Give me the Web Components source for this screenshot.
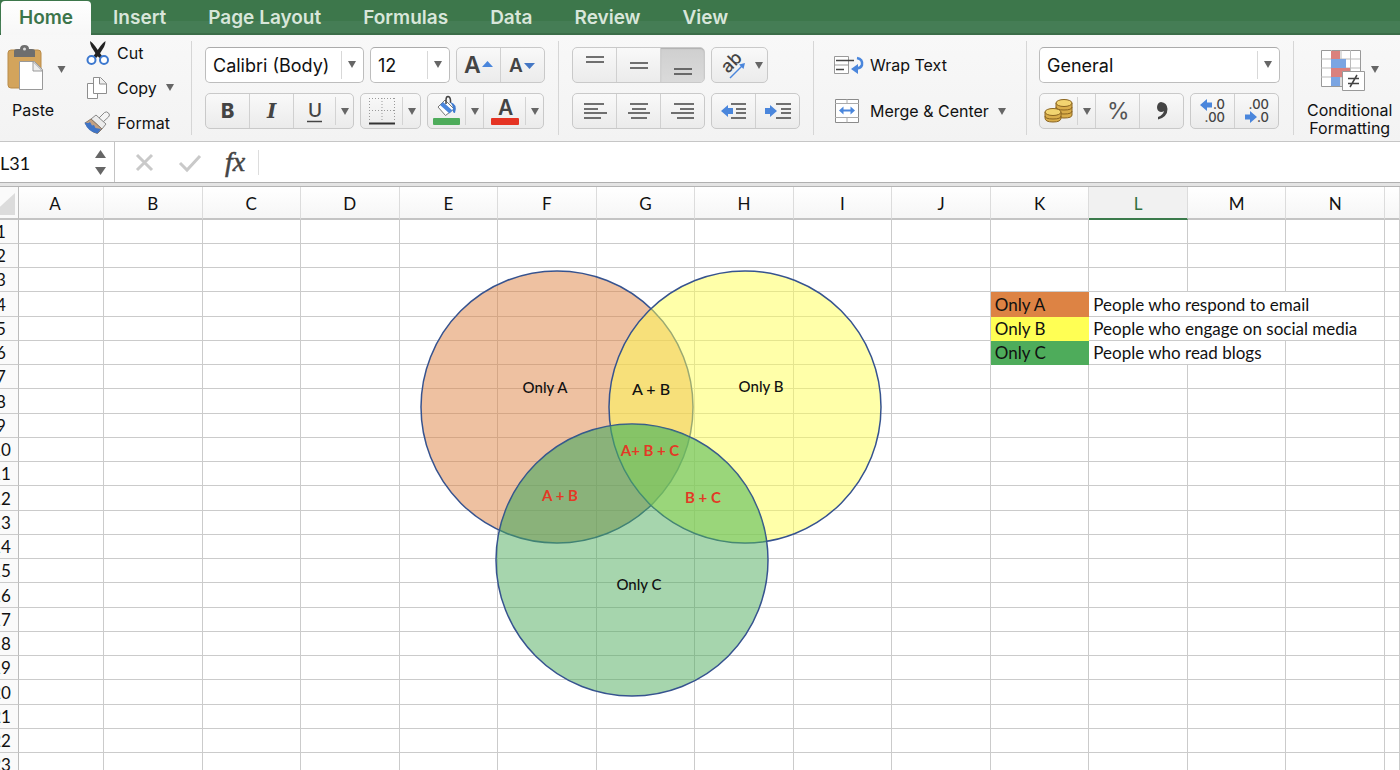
<!DOCTYPE html>
<html lang="en">
<head>
<meta charset="utf-8">
<meta name="viewport" content="width=device-width, initial-scale=1">
<title>Workbook</title>
<style>
    html, body {
        margin: 0;
        height: 100%;
    }

    body {
        display: flex;
        flex-direction: column;
        overflow: hidden;
        background: #fff;
        color: #111;
        font-family: Inter, "Liberation Sans", sans-serif;
        --cell-font: Lato, "Open Sans", sans-serif;
    }
</style>
</head>
<body>
<ribbon-tabs>
    <a href="#home" aria-current="page">Home</a>
    <a href="#insert">Insert</a>
    <a href="#layout">Page Layout</a>
    <a href="#formulas">Formulas</a>
    <a href="#data">Data</a>
    <a href="#review">Review</a>
    <a href="#view">View</a>
</ribbon-tabs>
<home-ribbon></home-ribbon>
<formula-bar cell="L31"></formula-bar>
<sheet-grid active="L"><venn-diagram></venn-diagram></sheet-grid>

<script>
class RibbonTabs extends HTMLElement {
    connectedCallback() {
        this.attachShadow({ mode: 'open' });
        this.shadowRoot.innerHTML = `
            <style>
                :host {
                    display: block;
                    flex: none;
                    background: linear-gradient(#3d774b 0 21px, #457d55 21px 33px, #3b6d49 33px);
                }

                nav {
                    display: flex;
                    gap: 2px;
                    height: 35px;
                    padding-left: 1px;
                    box-sizing: border-box;
                }

                ::slotted(a) {
                    margin-top: 1px;
                    padding: 0 20px;
                    border-radius: 4px 4px 0 0;
                    color: #d8e6da;
                    font-size: 19px;
                    font-weight: 600;
                    line-height: 33px;
                    text-decoration: none;
                    white-space: nowrap;
                }

                ::slotted(a[aria-current]) {
                    padding: 0 18px;
                    background: linear-gradient(#fff, #f7f7f7);
                    color: #3c754b;
                }
            </style>
            <nav><slot></slot></nav>
        `;
    }
}

// one push button, with an optional split arrow
class ToolButton extends HTMLElement {
    connectedCallback() {
        this.attachShadow({ mode: 'open' });
        const label = this.getAttribute('label');
        const arrow = this.hasAttribute('split')
            ? `<button class="arrow" aria-label="${label} options"><svg width="8" height="7"><path d="M0 0h8L4 7z"/></svg></button>`
            : '';
        this.shadowRoot.innerHTML = `
            <style>
                :host {
                    display: flex;
                    --main: 43px;
                }

                :host(:not(:first-child)) {
                    border-left: 1px solid #d0d0d0;
                }

                :host([size="mid"]) { --main: 41px; }
                :host([size="small"]) { --main: 37px; }

                button {
                    display: flex;
                    align-items: center;
                    justify-content: center;
                    padding: 0;
                    border: 0;
                    background: none;
                    font: inherit;
                    color: #444;
                }

                .main {
                    width: var(--main);
                }

                :host([pressed]) .main {
                    border-radius: 0 4px 4px 0;
                    background: linear-gradient(#cfcfcf, #dadada);
                    box-shadow: inset 0 1px 1px #b0b0b0;
                }

                .arrow {
                    width: 18px;
                    margin: 3px 0;
                    border-left: 1px solid #d3d3d3;
                    fill: #666;
                }

                :host([plain]) .arrow {
                    border-color: transparent;
                }
            </style>
            <button class="main" aria-label="${label}"><slot></slot></button>${arrow}
        `;
    }
}

class ButtonStrip extends HTMLElement {
    connectedCallback() {
        this.attachShadow({ mode: 'open' });
        this.shadowRoot.innerHTML = `
            <style>
                :host {
                    display: flex;
                    height: 36px;
                    box-sizing: border-box;
                    border: 1px solid #c9c9c9;
                    border-radius: 5px;
                    background: linear-gradient(#f9f9f9, #ebebeb);
                }
            </style>
            <slot></slot>
        `;
    }
}

class ComboBox extends HTMLElement {
    connectedCallback() {
        this.attachShadow({ mode: 'open' });
        this.shadowRoot.innerHTML = `
            <style>
                :host {
                    display: grid;
                    height: 36px;
                    box-sizing: border-box;
                    border: 1px solid #bdbdbd;
                    border-top-color: #ababab;
                    border-radius: 5px;
                    background: #fff;
                }

                select, svg {
                    grid-area: 1 / 1;
                }

                select {
                    appearance: none;
                    width: 100%;
                    padding: 0 0 0 7px;
                    border: 0;
                    background: none;
                    color: #111;
                    font: 18px Inter, sans-serif;
                }

                svg {
                    justify-self: end;
                    align-self: center;
                    pointer-events: none;
                }
            </style>
            <select aria-label="${this.getAttribute('label')}"><option>${this.getAttribute('value')}</option></select>
            <svg width="22" height="28"><path d="M.5 0v28" stroke="#d8d8d8"/><path d="M7 10h8l-4 7z" fill="#666"/></svg>
        `;
    }
}

class RibbonGroup extends HTMLElement {
    connectedCallback() {
        this.attachShadow({ mode: 'open' });
        this.shadowRoot.innerHTML = `
            <style>
                :host {
                    display: flex;
                    flex: none;
                    position: relative;
                    box-sizing: border-box;
                }

                :host(:not([last]))::after {
                    content: '';
                    position: absolute;
                    right: 0;
                    top: 6px;
                    bottom: 6px;
                    width: 1px;
                    background: #d6d6d6;
                }
            </style>
            <slot></slot>
        `;
    }
}

class HomeRibbon extends HTMLElement {
    connectedCallback() {
        this.attachShadow({ mode: 'open' });
        this.shadowRoot.innerHTML = `
            <style>
                :host {
                    display: flex;
                    flex: none;
                    height: 106px;
                    border-bottom: 1px solid #c6c6c6;
                    background: linear-gradient(#f8f8f8, #f3f3f3);
                }

                svg {
                    overflow: visible;
                }

                .clipboard { width: 192px; }
                .font { width: 367px; padding-left: 13px; }
                .align { width: 255px; padding-left: 13px; }
                .wrap { width: 213px; padding-left: 20px; }
                .number { width: 267px; padding-left: 12px; }
                .styles { flex: 1 0 106px; padding-left: 13px; }

                .rows {
                    display: grid;
                    grid-template-rows: 36px 36px;
                    align-content: start;
                    gap: 10px;
                    padding-top: 12px;
                }

                .row {
                    display: flex;
                    gap: 6px;
                }

                .face { width: 159px; }
                .size { width: 80px; }
                .format { width: 241px; }

                .flat {
                    display: flex;
                    align-items: center;
                    gap: 6px;
                    padding: 0;
                    border: 0;
                    background: none;
                    color: #111;
                    font: 16px/18px Inter, sans-serif;
                    white-space: nowrap;
                }

                .flat svg:first-child {
                    flex: none;
                }

                .tall {
                    flex-direction: column;
                    align-items: flex-start;
                    justify-content: flex-start;
                    gap: 8px;
                    padding: 10px 0 0 7px;
                }

                .tall span {
                    padding-left: 5px;
                }

                .styles .tall {
                    padding: 14px 0 0 0;
                }

                .styles .tall svg {
                    margin-left: 13px;
                }

                .styles .tall span {
                    padding: 0;
                    text-align: center;
                }

                .list {
                    display: grid;
                    grid-template-rows: repeat(3, 35px);
                    padding-left: 18px;
                }

                .drop {
                    fill: #666;
                    padding-left: 3px;
                }
            </style>

            <ribbon-group class="clipboard">
                <button class="flat tall">
                    <svg width="60" height="48" viewBox="0 0 60 48">
                        <rect x="1" y="5" width="33" height="38" rx="3" fill="#d3a45c" stroke="#b98b48"/>
                        <path d="M7 6q0-2 3-2h3q0-4 4.500-4t4.500 4h3q3 0 3 2v6H7z" fill="#6e6e6e"/>
                        <circle cx="17.500" cy="4" r="1.500" fill="#ddd"/>
                        <path d="M12.500 16.500h15l8 8v20h-23z" fill="#fff" stroke="#999"/>
                        <path d="M26 16.500v9.500h9.500z" fill="#eee" stroke="#999"/>
                        <path d="M50.500 21h8l-4 7z" fill="#666"/>
                    </svg>
                    <span>Paste</span>
                </button>
                <div class="list">
                    <button class="flat">
                        <svg width="26" height="26" viewBox="0 0 26 26">
                            <path d="M5 1q3 2 5 5l7 10-2.500 2-3-3-5-8Q5 4 5 1z" fill="#222"/>
                            <path d="M20.500 1q-3 2-5 5l-7 10 2.500 2 3-3 5-8q1.500-3 1.500-6z" fill="#222"/>
                            <circle cx="6.500" cy="20" r="4" fill="#fff" stroke="#3c78cf" stroke-width="2"/>
                            <circle cx="19" cy="20" r="4" fill="#fff" stroke="#3c78cf" stroke-width="2"/>
                        </svg>
                        <span>Cut</span>
                    </button>
                    <button class="flat">
                        <svg width="26" height="26" viewBox="0 0 26 26" fill="#fff" stroke="#8e8e8e">
                            <path d="M2.500 8.500h10v15h-10z"/>
                            <path d="M8.500 2.500h7l6 6v10h-13z"/>
                            <path d="M14.500 2.500v6.500h7" fill="#eee"/>
                        </svg>
                        <span>Copy</span>
                        <svg class="drop" width="8" height="7"><path d="M0 0h8L4 7z"/></svg>
                    </button>
                    <button class="flat">
                        <svg width="26" height="26" viewBox="0 0 26 26">
                            <path d="M14 8l5.500-5.500q2-1.500 4 .5t0 4L18 12z" fill="#f4f4f4" stroke="#888"/>
                            <path d="M11 5l10 9-4 5L6 9z" fill="#ececec" stroke="#888"/>
                            <path d="M6 9l11 10-4.500 4.500Q5 22 0 13z" fill="#c3a183" stroke="#8a7866"/>
                            <path d="M-.5 12.500l4 .5 1.500-1 2 3.500 2-.5 1.500 3 5.500 1-3.500 4.500Q3 22-.5 12.500z" fill="#3f74c6"/>
                        </svg>
                        <span>Format</span>
                    </button>
                </div>
            </ribbon-group>

            <ribbon-group class="font">
                <div class="rows">
                    <div class="row">
                        <combo-box class="face" label="Font" value="Calibri (Body)"></combo-box>
                        <combo-box class="size" label="Font size" value="12"></combo-box>
                        <button-strip>
                            <tool-button label="Increase font size">
                                <svg width="32" height="26"><text x="1" y="21" font-size="23" font-weight="600" fill="#444">A</text><path d="M19 15l5.500-6 5.500 6z" fill="#4a86dc"/></svg>
                            </tool-button>
                            <tool-button label="Decrease font size">
                                <svg width="30" height="26"><text x="1" y="20" font-size="19" font-weight="600" fill="#444">A</text><path d="M16 11h11l-5.500 6z" fill="#4477c4"/></svg>
                            </tool-button>
                        </button-strip>
                    </div>
                    <div class="row">
                        <button-strip>
                            <tool-button label="Bold"><svg width="18" height="26"><text x="2" y="20" font-size="20" font-weight="800" fill="#444">B</text></svg></tool-button>
                            <tool-button label="Italic"><svg width="18" height="26"><text x="4" y="20" font-family="DejaVu Serif" font-size="20" font-style="italic" font-weight="700" fill="#444">I</text></svg></tool-button>
                            <tool-button label="Underline" size="mid" split><svg width="18" height="26"><text x="2" y="19" font-size="19" font-weight="500" fill="#444">U</text><path d="M1 23.500h15" stroke="#444" stroke-width="1.500"/></svg></tool-button>
                        </button-strip>
                        <button-strip>
                            <tool-button label="Borders" size="mid" split>
                                <svg width="28" height="28" viewBox="0 0 28 28" fill="none" stroke="#999" stroke-dasharray="1 2">
                                    <path d="M1 1.500h26M1 13.500h26M1.500 1v24M14 1v24M26.500 1v24"/>
                                    <path d="M1 26.500h26" stroke="#333" stroke-width="2" stroke-dasharray="none"/>
                                </svg>
                            </tool-button>
                        </button-strip>
                        <button-strip>
                            <tool-button label="Fill color" size="small" split>
                                <svg width="28" height="30" viewBox="0 0 28 30">
                                    <path d="M5 11L12 4l9 9-8.500 6.500z" fill="#fff" stroke="#777"/>
                                    <path d="M10 6l9.500 8.500-3 3L7 9z" fill="#4a86dc"/>
                                    <path d="M13 8V4q0-3.500 2-3.500T17.500 4v3" fill="none" stroke="#444" stroke-width="1.500"/>
                                    <path d="M17 6q8 2 5 11-3 0-2-5-1-4-3-6z" fill="#3f7bd0"/>
                                    <rect x="0" y="22" width="27" height="7" rx="1" fill="#4eac5b"/>
                                </svg>
                            </tool-button>
                            <tool-button label="Font color" size="mid" split>
                                <svg width="28" height="30"><text x="7" y="19" font-size="21" font-weight="600" fill="#444">A</text><rect y="22" width="28" height="7" rx="1" fill="#e53323"/></svg>
                            </tool-button>
                        </button-strip>
                    </div>
                </div>
            </ribbon-group>

            <ribbon-group class="align">
                <div class="rows">
                    <div class="row">
                        <button-strip>
                            <tool-button label="Align top"><svg width="18" height="28" stroke="#444" stroke-width="1.500"><path d="M0 6h18M0 11h18"/></svg></tool-button>
                            <tool-button label="Align middle"><svg width="18" height="28" stroke="#444" stroke-width="1.500"><path d="M0 12h18M0 17h18"/></svg></tool-button>
                            <tool-button label="Align bottom" pressed><svg width="18" height="28" stroke="#444" stroke-width="1.500"><path d="M0 18h18M0 23h18"/></svg></tool-button>
                        </button-strip>
                        <button-strip>
                            <tool-button label="Orientation" size="small" split plain>
                                <svg width="28" height="28" viewBox="0 0 28 28">
                                    <text transform="translate(11 23) rotate(-45)" font-size="18" font-weight="500" fill="#444">ab</text>
                                    <path d="M13 27L25 15" stroke="#4a86dc" stroke-width="1.500"/>
                                    <path d="M28 12l-1.500 6-4.500-4.500z" fill="#4a86dc"/>
                                </svg>
                            </tool-button>
                        </button-strip>
                    </div>
                    <div class="row">
                        <button-strip>
                            <tool-button label="Align left"><svg width="24" height="18" stroke="#444" stroke-width="1.500"><path d="M1 2h20M1 7h14M1 11h23M1 16h17"/></svg></tool-button>
                            <tool-button label="Center"><svg width="22" height="18" stroke="#444" stroke-width="1.500"><path d="M2 2h18M4 7h14M0 11h22M3 16h16"/></svg></tool-button>
                            <tool-button label="Align right"><svg width="24" height="18" stroke="#444" stroke-width="1.500"><path d="M3 2h20M9 7h14M0 11h23M6 16h17"/></svg></tool-button>
                        </button-strip>
                        <button-strip>
                            <tool-button label="Decrease indent"><svg width="28" height="18"><path d="M1 9l7-6v3h5v6H8v3z" fill="#4a86dc"/><path d="M11 2h15M16 7h10M16 11h10M11 16h15" stroke="#444" stroke-width="1.500"/></svg></tool-button>
                            <tool-button label="Increase indent"><svg width="28" height="18"><path d="M13 9L6 3v3H1v6h5v3z" fill="#4a86dc"/><path d="M12 2h15M17 7h10M17 11h10M12 16h15" stroke="#444" stroke-width="1.500"/></svg></tool-button>
                        </button-strip>
                    </div>
                </div>
            </ribbon-group>

            <ribbon-group class="wrap">
                <div class="rows">
                    <button class="flat">
                        <svg width="30" height="22" viewBox="0 0 30 22">
                            <path d="M.5 2.500h14v17H.5zM.5 11h14" fill="#fff" stroke="#999"/>
                            <path d="M2 6.500h18M2 15.500h8" stroke="#444" stroke-width="1.500"/>
                            <path d="M23 4q6 1 5 7-1 3-5 3.500" fill="none" stroke="#4a86dc" stroke-width="2.500"/>
                            <path d="M17 15l7-5v10z" fill="#4a86dc"/>
                        </svg>
                        <span>Wrap Text</span>
                    </button>
                    <button class="flat">
                        <svg width="30" height="26" viewBox="0 0 30 26">
                            <path d="M1.500 1.500h23v23h-23z" fill="#fff" stroke="#8b8b8b"/>
                            <path d="M1 5.500h24M1 19.500h24M13 1v4.500M13 19.500v5" stroke="#aaa"/>
                            <path d="M5 12.500l4.500-4v3h7v-3l4.500 4-4.500 4v-3h-7v3z" fill="#4a86dc"/>
                        </svg>
                        <span>Merge &amp; Center</span>
                        <svg class="drop" width="8" height="7"><path d="M0 0h8L4 7z"/></svg>
                    </button>
                </div>
            </ribbon-group>

            <ribbon-group class="number">
                <div class="rows">
                    <div class="row">
                        <combo-box class="format" label="Number format" value="General"></combo-box>
                    </div>
                    <div class="row">
                        <button-strip>
                            <tool-button label="Currency" size="small" split>
                                <svg width="30" height="26" viewBox="0 0 30 26" stroke="#8a6420">
                                    <g fill="#d9ad4a">
                                        <path d="M12 5v12q0 3 8 3t8-3V5z"/>
                                        <path d="M12 9q0 3 8 3t8-3M12 13q0 3 8 3t8-3" fill="none"/>
                                        <ellipse cx="20" cy="5" rx="8" ry="3.500" fill="#f2d470"/>
                                        <path d="M1 14v6q0 4 8 4t8-4v-6z"/>
                                        <path d="M1 18q0 3 8 3t8-3" fill="none"/>
                                        <ellipse cx="9" cy="14" rx="8" ry="3.500" fill="#f2d470"/>
                                    </g>
                                </svg>
                            </tool-button>
                            <tool-button label="Percent"><svg width="22" height="26"><text x="0" y="21" font-size="23" fill="#555">%</text></svg></tool-button>
                            <tool-button label="Comma"><svg width="14" height="20" viewBox="0 0 14 20"><path d="M6 1q6 .5 6.500 7 0 8-9.500 10.500V16q5-2 6-6-1 1-3 1Q2 10.500 2 6 2.500 1.500 6 1z" fill="#444"/></svg></tool-button>
                        </button-strip>
                        <button-strip>
                            <tool-button label="Increase decimal">
                                <svg width="28" height="28"><path d="M1 8l7-6v3.500h5v5H8V14z" fill="#4a86dc"/><text x="26" y="12" text-anchor="end" font-size="13" font-weight="500" fill="#444">.0</text><text x="26" y="25" text-anchor="end" font-size="13" font-weight="500" fill="#444">.00</text></svg>
                            </tool-button>
                            <tool-button label="Decrease decimal">
                                <svg width="28" height="28"><path d="M14 20l-7-6v3.500H2v5h5V26z" fill="#4a86dc"/><text x="26" y="12" text-anchor="end" font-size="13" font-weight="500" fill="#444">.00</text><text x="26" y="25" text-anchor="end" font-size="13" font-weight="500" fill="#444">.0</text></svg>
                            </tool-button>
                        </button-strip>
                    </div>
                </div>
            </ribbon-group>

            <ribbon-group class="styles" last>
                <button class="flat tall">
                    <svg width="60" height="44" viewBox="0 0 60 44">
                        <path d="M1.500 1.500h39v36h-39z" fill="#fff" stroke="#999"/>
                        <path d="M1 10h39M1 19h39M1 28h39M11.500 1v36M21 1v36M30.500 1v36" stroke="#bbb"/>
                        <path d="M11 2h9v8h-9zM11 19h19v9H11z" fill="#da817d"/>
                        <path d="M11 10h15v9H11zM11 28h9v9h-9z" fill="#7ba5e2"/>
                        <path d="M22.500 22.500h22v19h-22z" fill="#fff" stroke="#999"/>
                        <path d="M28 29.500h11M28 34.500h11M37 26l-7 12" stroke="#444" stroke-width="1.500"/>
                        <path d="M51 17h8l-4 7z" fill="#666"/>
                    </svg>
                    <span>Conditional<br>Formatting</span>
                </button>
            </ribbon-group>
        `;
    }
}

class FormulaBar extends HTMLElement {
    connectedCallback() {
        this.attachShadow({ mode: 'open' });
        this.shadowRoot.innerHTML = `
            <style>
                :host {
                    display: flex;
                    flex: none;
                    align-items: stretch;
                    height: 40px;
                    border-bottom: 1px solid #b0b0b0;
                    background: #fff;
                }

                .name {
                    display: flex;
                    align-items: center;
                    width: 114px;
                    border-right: 1px solid #c4c4c4;
                }

                input {
                    min-width: 0;
                    padding: 0;
                    border: 0;
                    outline: 0;
                    background: none;
                    color: #111;
                    font: 18px var(--cell-font);
                }

                .name input {
                    width: 94px;
                    padding-top: 2px;
                }

                .content {
                    flex: 1;
                    margin: 8px 0 7px;
                    padding-left: 10px;
                    border-left: 1px solid #ddd;
                }

                .tools {
                    display: flex;
                    align-items: center;
                    gap: 23px;
                    padding: 0 13px 0 19px;
                }

                button {
                    display: flex;
                    padding: 0;
                    border: 0;
                    background: none;
                    color: #444;
                    font: italic 28px/30px "Liberation Serif", serif;
                    -webkit-text-stroke: 0.5px #444;
                }

                svg {
                    overflow: visible;
                }
            </style>
            <div class="name">
                <input aria-label="Name box" value="${this.getAttribute('cell')}">
                <svg width="12" height="26" fill="#666"><path d="M1 9h11L6.500 1zM1 18h11l-5.500 8z"/></svg>
            </div>
            <div class="tools">
                <button aria-label="Cancel"><svg width="21" height="22" fill="none" stroke="#c9c9c9" stroke-width="3"><path d="M3 4l15 15M18 4L3 19"/></svg></button>
                <button aria-label="Enter"><svg width="24" height="22" fill="none" stroke="#c9c9c9" stroke-width="3"><path d="M2 12l7 7L22 5"/></svg></button>
                <button aria-label="Insert function">fx</button>
            </div>
            <input class="content" aria-label="Formula">
        `;
    }
}

const COLUMNS = 'ABCDEFGHIJKLMN'.split('');
const ROWS = 23;

// key and description by row; span is how far the description runs over empty cells
const LEGEND = {
    4: { key: 'Only A', color: '#dd8344', text: 'People who respond to email', span: 3 },
    5: { key: 'Only B', color: '#ffff54', text: 'People who engage on social media', span: 3 },
    6: { key: 'Only C', color: '#4eac5b', text: 'People who read blogs', span: 2 }
};

class SheetGrid extends HTMLElement {
    connectedCallback() {
        this.attachShadow({ mode: 'open' });
        const active = this.getAttribute('active');
        const heads = COLUMNS.map(c => `<th scope="col"${c === active ? ' class="active"' : ''}>${c}</th>`).join('');
        let body = '';
        for (let r = 1; r <= ROWS; r++) {
            body += `<tr><th scope="row">${r}</th>${this.cells(LEGEND[r])}</tr>`;
        }
        this.shadowRoot.innerHTML = `
            <style>
                :host {
                    display: block;
                    position: relative;
                    flex: 1;
                    min-height: 0;
                    border-top: 3px solid #e4e4e4;
                    box-shadow: inset 0 1px #b4b4b4;
                    padding-top: 1px;
                    overflow: hidden;
                    font-family: var(--cell-font);
                }

                /* the view is scrolled a little past the row header */
                table {
                    width: calc(100% + 14px);
                    margin-left: -14px;
                    table-layout: fixed;
                    border-collapse: separate;
                    border-spacing: 0;
                    font-size: 17px;
                    line-height: 20px;
                }

                .rowhead { width: 33px; }
                .first { width: 85px; }
                .rest { width: 15px; }

                th, td {
                    box-sizing: border-box;
                    height: 24px;
                    padding: 1px 0 0;
                    border-right: 1px solid #cbcbcb;
                    border-bottom: 1px solid #cbcbcb;
                    font-weight: 400;
                    white-space: nowrap;
                }

                tbody tr:nth-child(4n) > * {
                    height: 25px;
                }

                thead th {
                    height: 33px;
                    padding-top: 2px;
                    border-bottom: 2px solid #c4c4c4;
                    border-right-color: #dcdcdc;
                    background: linear-gradient(#fff, #f6f6f6);
                }

                thead th:nth-child(2) {
                    padding-right: 12px;
                }

                thead th.active {
                    border-bottom-color: #3b7a4b;
                    background: #f1f1f1;
                    color: #2f7040;
                }

                .corner svg {
                    display: block;
                    margin-left: 14px;
                }

                tbody th, th.corner {
                    border-right-color: #bcbcbc;
                    background: #fafafa;
                }

                tbody th {
                    padding-right: 2px;
                }

                td {
                    text-align: left;
                }

                .key {
                    padding-left: 4px;
                    border-color: transparent;
                }

                .text {
                    padding-left: 4px;
                }
            </style>
            <table>
                <colgroup><col class="rowhead"><col class="first"><col span="13"><col class="rest"></colgroup>
                <thead><tr><th class="corner" aria-label="Select all"><svg width="16" height="26"><path d="M15 2v22H-9z" fill="#dcdcdc"/></svg></th>${heads}<th></th></tr></thead>
                <tbody>${body}</tbody>
            </table>
            <slot></slot>
        `;
    }

    cells(legend) {
        if (!legend) {
            return '<td></td>'.repeat(15);
        }
        return '<td></td>'.repeat(10) +
            `<td class="key" style="background:${legend.color}">${legend.key}</td>` +
            `<td class="text" colspan="${legend.span}">${legend.text}</td>` +
            '<td></td>'.repeat(4 - legend.span);
    }
}

class VennDiagram extends HTMLElement {
    connectedCallback() {
        this.attachShadow({ mode: 'open' });
        this.shadowRoot.innerHTML = `
            <style>
                :host {
                    position: absolute;
                    left: 419px;
                    top: 83px;
                }

                svg {
                    display: block;
                }

                circle {
                    fill-opacity: 0.5;
                    stroke: #36538f;
                    stroke-width: 1.500;
                }

                .tint {
                    fill-opacity: 0.2;
                    stroke: none;
                }

                text {
                    font-size: 15px;
                    font-weight: 500;
                    text-anchor: middle;
                    fill: #111;
                }

                .shared {
                    font-weight: 700;
                    fill: #e23a26;
                }

                .large {
                    font-size: 16px;
                }
            </style>
            <svg width="464" height="430" role="img" aria-label="Venn diagram of A, B and C">
                <clipPath id="in-c"><circle cx="213" cy="291" r="136"/></clipPath>
                <circle cx="138" cy="138" r="136" fill="#dd8344"/>
                <circle cx="326" cy="138" r="136" fill="#ffff54"/>
                <circle cx="213" cy="291" r="136" fill="#4eac5b"/>
                <g clip-path="url(#in-c)">
                    <circle class="tint" cx="138" cy="138" r="136" fill="#3aa770"/>
                    <circle class="tint" cx="326" cy="138" r="136" fill="#70da5a"/>
                </g>
                <text x="126" y="124">Only A</text>
                <text x="232" y="126" class="large">A + B</text>
                <text x="342" y="123">Only B</text>
                <text x="231" y="187" class="shared">A+ B + C</text>
                <text x="141" y="232" class="shared">A + B</text>
                <text x="284" y="234" class="shared">B + C</text>
                <text x="220" y="321">Only C</text>
            </svg>
        `;
    }
}

customElements.define('ribbon-tabs', RibbonTabs);
customElements.define('tool-button', ToolButton);
customElements.define('button-strip', ButtonStrip);
customElements.define('combo-box', ComboBox);
customElements.define('ribbon-group', RibbonGroup);
customElements.define('home-ribbon', HomeRibbon);
customElements.define('formula-bar', FormulaBar);
customElements.define('sheet-grid', SheetGrid);
customElements.define('venn-diagram', VennDiagram);
</script>
</body>
</html>
